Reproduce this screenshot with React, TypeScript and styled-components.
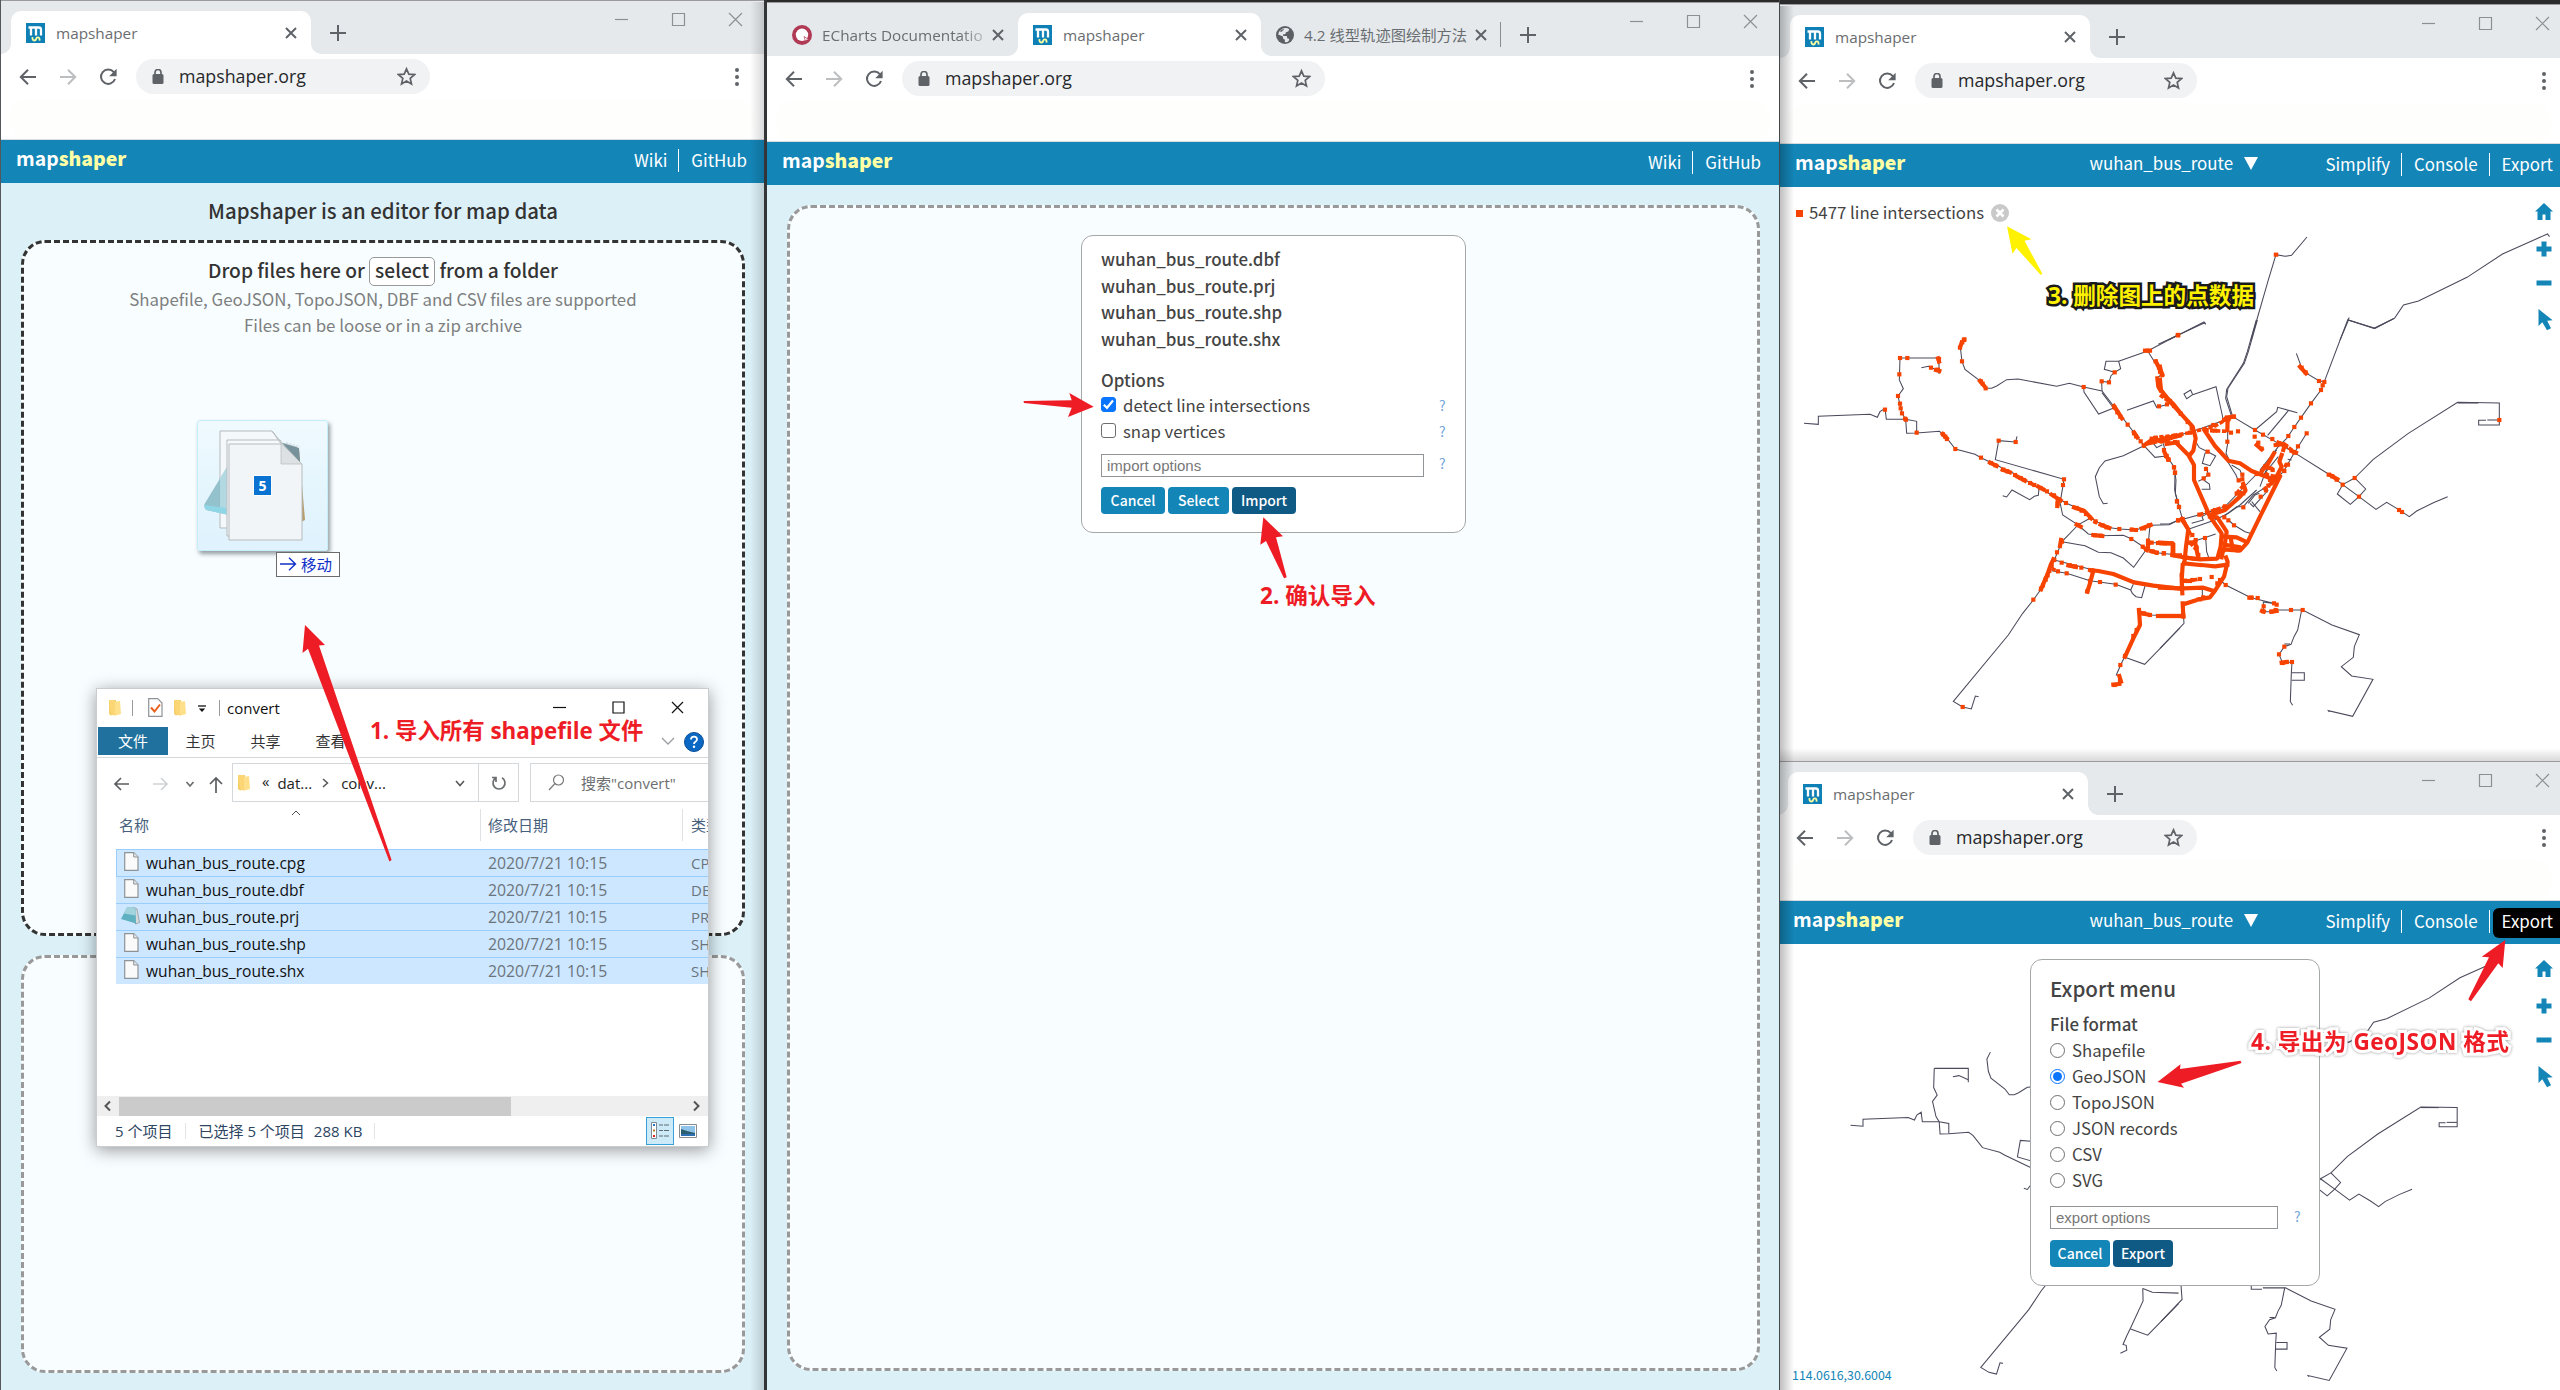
import React from 'react';
import styled, { createGlobalStyle, css } from 'styled-components';

const UI = '"Open Sans", "Noto Sans CJK SC", sans-serif';
const PAGE = '"Noto Sans CJK SC", "Noto Sans", sans-serif';
const BLUE = '#1385b7';
const RED = '#ee1c25';

const Global = createGlobalStyle`
  * { box-sizing: border-box; }
  body { margin: 0; background: #2b2b2b; overflow: hidden; }
`;

const Desktop = styled.div`
  position: relative;
  display: flex;
  width: 2560px;
  height: 1390px;
  overflow: hidden;
  background: #2b2b2b;
`;

/* ---------- windows ---------- */

const Win = styled.section<{ w: number }>`
  display: flex;
  flex-direction: column;
  flex: none;
  width: ${p => p.w}px;
  min-height: 0;
  background: #fff;
  border-top: 1px solid #9b9b9f;
  overflow: hidden;
`;

const LeftCell = styled.div`
  display: flex;
  width: 764px;
  border-left: 1px solid #55585a;
`;

const MiddleCell = styled.div`
  display: flex;
  width: 1016px;
  padding-top: 2px;
  border-left: 3px solid #333536;
  border-right: 1px solid #46494b;
`;

const RightCell = styled.div`
  display: flex;
  flex-direction: column;
  width: 780px;
  padding-top: 4px;
`;

const Strip = styled.div<{ nudge?: number }>`
  display: flex;
  align-items: flex-end;
  flex: none;
  height: 53px;
  padding-left: ${p => 10 + (p.nudge || 0)}px;
  background: #e5e9ec;
`;

const TabBox = styled.div<{ w: number; active?: boolean }>`
  position: relative;
  display: flex;
  align-items: center;
  flex: none;
  width: ${p => p.w}px;
  height: 43px;
  padding: 0 13px 0 15px;
  border-radius: 10px 10px 0 0;
  background: ${p => (p.active ? '#fff' : 'transparent')};
  ${p =>
    p.active &&
    css`
      &::before,
      &::after {
        content: '';
        position: absolute;
        bottom: 0;
        width: 10px;
        height: 10px;
      }
      &::before {
        left: -10px;
        background: radial-gradient(circle at 0 0, transparent 9.5px, #fff 10px);
      }
      &::after {
        right: -10px;
        background: radial-gradient(circle at 100% 0, transparent 9.5px, #fff 10px);
      }
    `}
`;

const TabTitle = styled.span<{ fade?: boolean }>`
  flex: 1;
  margin-right: 1px;
  white-space: nowrap;
  font: 15.3px/22px ${UI};
  color: #6a6d70;
  ${p => p.fade && 'mask-image: linear-gradient(90deg, #000 82%, rgba(0,0,0,.15));'}
`;

const Favicon = styled.span`
  display: block;
  flex: none;
  width: 30px;
  height: 20px;
`;

const TabRule = styled.i`
  align-self: flex-end;
  width: 1px;
  height: 25px;
  margin: 0 0 9px -1px;
  background: #8b8e91;
`;

const PlusWrap = styled.span`
  display: flex;
  align-items: center;
  height: 42px;
  margin-left: 19px;
`;

const Controls = styled.span<{ right: number }>`
  display: flex;
  gap: 42px;
  align-self: flex-start;
  margin: 11px ${p => p.right}px 0 auto;
`;

const Toolbar = styled.div<{ nudge?: number }>`
  display: flex;
  align-items: center;
  flex: none;
  height: 45px;
  padding-left: ${p => 18 + (p.nudge || 0)}px;
`;

const NavIcon = styled.span<{ gap: number }>`
  display: flex;
  width: 18px;
  margin-right: ${p => p.gap}px;
`;

const Pill = styled.div<{ w: number }>`
  display: flex;
  align-items: center;
  width: ${p => p.w}px;
  height: 35px;
  padding: 0 14px 0 16px;
  border-radius: 18px;
  background: #f1f2f4;
`;

const Url = styled.span`
  flex: 1;
  margin: -1px 0 0 15px;
  font: 17.8px/30px ${UI};
  color: #26282b;
`;

const Dots = styled.span<{ right: number }>`
  display: flex;
  flex-direction: column;
  gap: 3px;
  margin: 0 ${p => p.right}px 0 auto;
  i {
    width: 4px;
    height: 4px;
    border-radius: 2px;
    background: #5f6368;
  }
`;

const Blank = styled.div`
  flex: none;
  height: 40px;
  margin: 0 8px;
  background: #fefefc;
  border-radius: 20px;
`;

const HeaderBar = styled.header<{ right: number; left: number }>`
  display: flex;
  align-items: center;
  flex: none;
  height: 44px;
  padding: 0 ${p => p.right}px 0 ${p => p.left}px;
  border-top: 1px solid #d9dcde;
  background: ${BLUE};
  background-clip: padding-box;
  font: 16.9px/30px ${PAGE};
  color: #fff;
`;

const Logo = styled.span`
  font: bold 19.4px/30px ${PAGE};
  margin-top: -7px;
  b {
    color: #ffffa6;
  }
`;

const Links = styled.nav`
  display: flex;
  align-items: center;
  margin: -3px 0 0 auto;
`;

const Link = styled.span<{ on?: boolean }>`
  height: 23px;
  padding: 0 11px 0 12px;
  line-height: 21px;
  &:last-child {
    padding-right: 0;
  }
  & + & {
    position: relative;
    border-left: 1px solid #fff;
  }
  ${p =>
    p.on &&
    css`
      &::before {
        content: '';
        position: absolute;
        z-index: -1;
        inset: -2px -7px -5px 3px;
        border-radius: 6px 0 0 6px;
        background: #000;
      }
      isolation: isolate;
    `}
`;

const Layer = styled.span`
  width: 170px;
  margin: -5px 54px 0 auto;
  white-space: nowrap;
`;

const LinksAfterLayer = styled(Links)`
  margin-left: 0;
`;

const TriDown = styled.i`
  display: inline-block;
  margin-left: 11px;
  border: 7px solid transparent;
  border-top: 13px solid #fff;
  border-bottom: 0;
`;

/* ---------- icons ---------- */

const MsIcon = () => (
  <Favicon>
    <svg width="19" height="20" viewBox="0 0 19 20">
      <rect width="19" height="20" fill="#0f80b5" />
      <path d="M2.500 4.500h10.200q2.300 0 2.300 2.300v5.700M5 4v8.500M10 5v7.500" fill="none" stroke="#fff" strokeWidth="2.300" />
      <path d="M6.500 14.200q-.4 3.300 1.800 3.300 1.500 0 1.800-1.500.3-1.600 1.700-1.600 2.100 0 1.700 3.200" fill="none" stroke="#ffffa0" strokeWidth="1.800" />
    </svg>
  </Favicon>
);

const EchartsIcon = () => (
  <Favicon>
    <svg width="20" height="20" viewBox="0 0 20 20">
      <circle cx="10" cy="10" r="10" fill="#b03a55" />
      <circle cx="10" cy="9.800" r="6.200" fill="#fff" />
      <path d="M12 11.500l5 3.200-2.700.4-.5 2z" fill="#fff" stroke="#b03a55" strokeWidth=".7" />
    </svg>
  </Favicon>
);

const GlobeWrap = styled(Favicon)`
  width: 28px;
  height: 18px;
`;

const GlobeIcon = () => (
  <GlobeWrap>
    <svg width="18" height="18" viewBox="0 0 18 18">
      <circle cx="9" cy="9" r="9" fill="#5c6064" />
      <path d="M9 2q2.500-.4 4.300 1.300l-1 2.300-2.300.6-.6 1.900-2.400.3.200 1.600h3.600l.6 2.500 1.700.3q.5 1.200-.6 2.400Q11 16.800 8.800 16l.1-2.200-1.900-1.400v-2L2.200 8.400Q3 3.200 9 2z" fill="#e5e9ec" />
      <path d="M3.600 5.500l2 .3 2.700-2.600q-3-.4-4.700 2.300z" fill="#5c6064" />
    </svg>
  </GlobeWrap>
);

const CrossIcon = () => (
  <svg width="14" height="14" viewBox="0 0 14 14">
    <path d="M2 2l10 10M12 2L2 12" stroke="#5f6368" strokeWidth="2" />
  </svg>
);

const PlusIcon = () => (
  <svg width="16" height="16" viewBox="0 0 16 16">
    <path d="M8 0v16M0 8h16" stroke="#5f6368" strokeWidth="2" />
  </svg>
);

const Ctl = ({ d, color = '#8d9093' }: { d: string; color?: string }) => (
  <svg width="15" height="15" viewBox="0 0 15 15">
    <path d={d} fill="none" stroke={color} strokeWidth="1.2" />
  </svg>
);

const BackIcon = () => (
  <svg width="18" height="18" viewBox="0 0 18 18">
    <path d="M17 9H2.500M9 1.800L1.800 9 9 16.200" fill="none" stroke="#5f6368" strokeWidth="2" />
  </svg>
);

const ForwardIcon = () => (
  <svg width="18" height="18" viewBox="0 0 18 18">
    <path d="M1 9h14.500M9 1.800L16.200 9 9 16.200" fill="none" stroke="#bcbec0" strokeWidth="2" />
  </svg>
);

const ReloadIcon = () => (
  <svg width="18" height="18" viewBox="0 0 18 18">
    <path d="M14.800 4.200A7.200 7.200 0 1 0 16 11" fill="none" stroke="#5f6368" strokeWidth="2" />
    <path d="M17.600.8v7.400h-7.400z" fill="#5f6368" />
  </svg>
);

const LockIcon = () => (
  <svg width="12" height="16" viewBox="0 0 12 16">
    <rect x=".5" y="5" width="11" height="10" rx="1.500" fill="#5f6368" />
    <path d="M3 6V3.500a3 3 0 0 1 6 0V6" fill="none" stroke="#5f6368" strokeWidth="1.700" />
  </svg>
);

const StarIcon = () => (
  <svg width="19" height="19" viewBox="0 0 19 19">
    <path d="M9.500 1.800l2.300 5.300 5.800.5-4.400 3.800 1.300 5.700-5-3-5 3 1.300-5.700L1.400 7.600l5.800-.5z" fill="none" stroke="#5f6368" strokeWidth="1.700" />
  </svg>
);

/* ---------- chrome ---------- */

type TabData = { title: string; w: number; icon: React.ReactNode; active?: boolean; fade?: boolean };
type ChromeProps = {
  tabs: TabData[];
  pill: number;
  ctlRight: number;
  dotsRight: number;
  nudge?: number;
  rule?: boolean;
};

const Chrome = ({ tabs, pill, ctlRight, dotsRight, nudge, rule }: ChromeProps) => (
  <>
    <Strip nudge={nudge}>
      {tabs.map(t => (
        <TabBox key={t.title} w={t.w} active={t.active}>
          {t.icon}
          <TabTitle fade={t.fade}>{t.title}</TabTitle>
          <CrossIcon />
        </TabBox>
      ))}
      {rule && <TabRule />}
      <PlusWrap>
        <PlusIcon />
      </PlusWrap>
      <Controls right={ctlRight}>
        <Ctl d="M1 7.500h13" />
        <Ctl d="M1.500 1.500h12v12h-12z" />
        <Ctl d="M1 1l13 13M14 1L1 14" />
      </Controls>
    </Strip>
    <Toolbar nudge={nudge}>
      <NavIcon gap={22}><BackIcon /></NavIcon>
      <NavIcon gap={22}><ForwardIcon /></NavIcon>
      <NavIcon gap={19}><ReloadIcon /></NavIcon>
      <Pill w={pill}>
        <LockIcon />
        <Url>mapshaper.org</Url>
        <StarIcon />
      </Pill>
      <Dots right={dotsRight}><i /><i /><i /></Dots>
    </Toolbar>
    <Blank />
  </>
);

type HeaderProps = { links: string[]; right: number; left?: number; layer?: string; active?: string };

const Header = ({ links, right, left = 15, layer, active }: HeaderProps) => {
  const Nav = layer ? LinksAfterLayer : Links;
  return (
    <HeaderBar right={right} left={left}>
      <Logo>map<b>shaper</b></Logo>
      {layer && <Layer>{layer}<TriDown /></Layer>}
      <Nav>
        {links.map(l => <Link key={l} on={l === active}>{l}</Link>)}
      </Nav>
    </HeaderBar>
  );
};

/* ---------- landing page ---------- */

const Page = styled.main`
  display: flex;
  flex-direction: column;
  flex: 1;
  min-height: 0;
  padding: 0 19px 0 20px;
  background: #dcf0f8;
`;

const Headline = styled.h1<{ mt: number; size: number }>`
  margin: ${p => p.mt}px 0 0;
  height: 30px;
  text-align: center;
  font: 500 ${p => p.size}px/30px ${PAGE};
  color: #333;
  white-space: nowrap;
`;

const DropBox = styled.div<{ h: number; c: string; mt: number }>`
  flex: none;
  height: ${p => p.h}px;
  margin-top: ${p => p.mt}px;
  border: 3px dashed ${p => p.c};
  border-radius: 24px;
  background: #f8fdff;
`;

const SelectBtn = styled.span`
  display: inline-block;
  height: 29px;
  padding: 0 5px;
  border: 1px solid #999;
  border-radius: 5px;
  line-height: 25px;
  background: #fff;
`;

const Hint = styled.p`
  margin: 0;
  height: 26px;
  text-align: center;
  font: 16.85px/25px ${PAGE};
  color: #7d7f80;
  white-space: nowrap;
`;

/* ---------- dialogs ---------- */

const Dialog = styled.div<{ w: number; h: number; pad: string }>`
  display: flex;
  flex-direction: column;
  width: ${p => p.w}px;
  height: ${p => p.h}px;
  margin: 0 auto;
  padding: ${p => p.pad};
  border: 1px solid #a5a8a9;
  border-radius: 12px;
  background: #fff;
  font: 16.75px/23px ${PAGE};
  color: #444;
`;

const Strong = styled.div<{ h: number; size?: number }>`
  flex: none;
  height: ${p => p.h}px;
  font-weight: 500;
  font-size: ${p => p.size || 16.9}px;
  line-height: ${p => p.h - 2}px;
`;

const Row = styled.label`
  display: flex;
  align-items: center;
  flex: none;
  height: 26px;
  padding-bottom: 3px;
`;

const Box = styled.i<{ on?: boolean; round?: boolean }>`
  display: flex;
  align-items: center;
  justify-content: center;
  width: 15px;
  height: 15px;
  margin: -1px 7px 0 0;
  border: 1px solid ${p => (p.on ? '#0a75ff' : '#6f6f6f')};
  border-radius: ${p => (p.round ? '50%' : '3px')};
  background: ${p => (p.on && !p.round ? '#0a75ff' : '#fff')};
`;

const RadioDot = styled.i`
  width: 9px;
  height: 9px;
  border-radius: 50%;
  background: #0a75ff;
`;

const Help = styled.span`
  width: 8px;
  margin-left: auto;
  font: 14px/20px ${PAGE};
  color: #74a5d8;
`;

const Field = styled.span<{ w: number }>`
  width: ${p => p.w}px;
  height: 23px;
  margin: 2px 0 -2px;
  padding-left: 5px;
  border: 1px solid #919496;
  background: #fff;
  font: 15px/21px "Liberation Sans", sans-serif;
  color: #777;
`;

const Buttons = styled.div`
  display: flex;
  gap: 3px;
`;

const Button = styled.span<{ dark?: boolean; w: number }>`
  width: ${p => p.w}px;
  height: 27px;
  border-radius: 4px;
  background: ${p => (p.dark ? '#0f5985' : BLUE)};
  text-align: center;
  font: 500 14px/26px ${PAGE};
  color: #fff;
`;

const Spacer = styled.div<{ h: number }>`
  flex: none;
  height: ${p => p.h}px;
`;

const ImportDialog = () => (
  <Dialog w={385} h={298} pad="11px 18px 0 19px">
    {['dbf', 'prj', 'shp', 'shx'].map(e => (
      <Strong key={e} h={26.700}>wuhan_bus_route.{e}</Strong>
    ))}
    <Spacer h={13} />
    <Strong h={27}>Options</Strong>
    <Row>
      <Box on>
        <svg width="13" height="13" viewBox="0 0 13 13">
          <path d="M1.800 6.800l3.200 3 6-7.300" fill="none" stroke="#fff" strokeWidth="2.200" />
        </svg>
      </Box>
      detect line intersections
      <Help>?</Help>
    </Row>
    <Row><Box />snap vertices<Help>?</Help></Row>
    <Spacer h={6} />
    <Row><Field w={323}>import options</Field><Help>?</Help></Row>
    <Spacer h={9} />
    <Buttons>
      <Button w={64}>Cancel</Button>
      <Button w={61}>Select</Button>
      <Button w={64} dark>Import</Button>
    </Buttons>
  </Dialog>
);

const ExportPlace = styled.div`
  position: absolute;
  left: 250px;
  top: 15px;
`;

const ExportDialog = () => (
  <ExportPlace>
    <Dialog w={290} h={327} pad="13px 17px 0 19px">
      <Strong h={32} size={20.600}>Export menu</Strong>
      <Spacer h={6} />
      <Strong h={28}>File format</Strong>
      {['Shapefile', 'GeoJSON', 'TopoJSON', 'JSON records', 'CSV', 'SVG'].map(f => (
        <Row key={f}>
          <Box round on={f === 'GeoJSON'}>{f === 'GeoJSON' && <RadioDot />}</Box>
          {f}
        </Row>
      ))}
      <Spacer h={9} />
      <Row><Field w={228}>export options</Field><Help>?</Help></Row>
      <Spacer h={10} />
      <Buttons>
        <Button w={60}>Cancel</Button>
        <Button w={60} dark>Export</Button>
      </Buttons>
    </Dialog>
  </ExportPlace>
);

/* ---------- bus network ---------- */

const WEST = 'translate(1780 320) scale(.33333)';
const EAST = 'translate(2160 320) scale(.33333)';
const NORTH = 'translate(1776 0) scale(.5 .33333)';

const northLines = [
  '1062,711 1031,766 1018,769 1000,764 985,838 950,1020',
  '1547,710 1543,702 1508,725 1453,762 1382,832 1285,903 1255,915 1237,955 1196,985 1145,960 1128,1020',
  '785,1020 804,1006 856,966 859,973',
];

const westLines = [
  '72,310 115,313 115,289 270,283 292,292 300,275 315,265 319,298 377,298',
  '360,114 477,114 477,162', '424,143 445,139 477,153',
  '360,114 358,180 370,206 354,228 366,280 377,298 410,304 410,338',
  '377,298 380,340 410,339 478,334 493,345 526,387 585,403 603,413 700,460 838,538',
  '553,58 541,82 546,124 555,148 603,185 618,205 635,205 650,198 680,179 714,177 830,199 868,190 911,201 966,213 1003,261 1092,377',
  '911,201 912,216 956,282 1003,263', '966,213 965,184 987,187 993,167 1004,157',
  '1004,157 973,148 978,124 1016,124 1022,146 1004,157', '1016,124 1103,93 1194,45',
  '1103,93 1145,160 1130,180 1155,228 1200,280', '966,218 1005,270',
  '1041,271 1120,243 1130,262 1168,252', '1092,377 1030,407 975,423 958,443 946,470 958,530 970,551 983,550',
  '1092,377 1125,412 1158,408', '1120,370 1130,383 1147,374', '711,349 707,366 656,362 646,419 852,478 849,497 842,538',
  '668,527 680,531 696,510 749,539 763,529 775,526 777,505',
  '838,538 858,549 905,570 930,593 980,622 1018,627 1068,630 1110,616 1168,614 1194,601',
  '838,538 848,585 894,615 930,595', '894,615 925,642 960,647 1030,646 1055,657 1100,687 1130,698 1200,706',
  '894,615 846,665 823,720 785,805 760,840 728,880 685,945 520,1144 548,1161 574,1167 586,1128 596,1130',
  '846,665 915,677 955,697 993,698 1030,714 1061,742 1100,687 1105,668 1110,616',
  '823,720 940,750 1000,762 1090,793 1200,806',
  '815,752 860,760 930,782 1007,793 1052,810 1057,820 1068,830 1085,833 1095,798', '1052,810 1060,793', '940,750 922,815',
  '1077,872 1078,915 1035,1008 1022,1035 1009,1065 1020,1068 1022,1085 1000,1095',
  '1035,1012 1094,1033 1200,924', '1077,872 1110,885 1200,888',
  '1150,370 1158,405 1182,440 1188,480 1186,520 1200,565', '1105,668 1180,668 1180,703',
];

const eastLines = [
  '-5,73 134,8 137,13', '292,0 265,95 253,130 204,205 200,230 218,290', '289,0 262,95 250,130 200,208 197,235 215,290',
  '568,-7 563,0 493,185', '563,0 645,25 700,-4', '409,100 425,143 440,160 478,183 493,185 483,210 453,250 423,293 403,321 380,355 355,380 300,450',
  '98,224 168,200 190,300', '98,224 80,236 72,222 92,210 98,224', '285,330 350,275 353,262 412,278', '385,272 323,346',
  '218,290 285,330 355,370 403,398 510,465 548,494 597,530 648,568 680,547 720,571 748,590 770,573 820,548 863,530',
  '548,494 532,522 571,553 597,530 617,507 584,474 548,494', '584,474 640,418 745,340 893,247 1018,249 1018,300',
  '893,249 955,249', '978,301 956,301 956,315 1018,315 1018,300', '1018,300 982,300',
  '440,340 403,398 370,455 345,480', '0,360 95,335 195,300 218,290',
  '110,370 118,383 143,395 167,408 150,437 127,430 135,400 143,395', '138,440 145,463 131,476 115,484',
  '131,480 148,492 150,508 125,508', '203,300 203,370 198,400 210,425', '203,425 228,465 236,485 250,475 240,450 215,435',
  '205,600 222,615 255,635 270,640', '85,628 165,600 205,580 240,555 290,510', '95,610 130,600 126,590 160,570',
  '107,662 167,642', '137,655 140,695 147,715', '190,590 230,560 250,560 280,525 320,500', '275,545 300,575', '265,550 285,525 298,520',
  '310,465 355,410', '300,500 330,420 350,390', '270,550 280,560 325,510', '383,418 395,420',
  '45,458 44,510 52,545 68,598 135,580 195,560 290,462', '0,612 27,612 55,601', '127,805 127,835',
  '68,855 72,910 0,985', '180,780 197,795 273,833 350,852 310,846 310,875 347,875', '350,870 428,870 516,915 598,944 583,980 580,1012 544,1040 575,1068 639,1078 578,1189 505,1172 508,1176',
  '425,870 413,930 402,950 393,973 373,980 357,1003 368,1029 396,1026 394,1060 391,1145 398,1156', '373,972 390,972', '396,1058 433,1058 433,1081 395,1081',
];

const westThick = [
  '630,428 650,438', '668,449 690,457', '712,470 735,482', '775,500 790,508', '815,524 842,541', '833,540 832,558',
  '882,562 912,572 934,595', '962,614 988,624', '1085,625 1112,615', '940,645 967,648', '1002,258 1026,295', '1062,337 1072,352',
  '865,736 888,741', '930,750 955,753 1000,762 1062,787 1120,797 1200,806', '820,718 812,735 800,770', '797,775 783,808',
  '940,752 930,790 922,815', '1077,870 1080,915 1060,955 1035,1010', '1085,880 1105,884', '1145,888 1200,888', '1018,1068 1023,1085',
  '1000,1094 1018,1092', '1092,376 1120,356 1145,365 1185,350 1200,347', '1106,370 1125,366', '1160,372 1193,367', '1128,125 1147,163',
  '1132,175 1135,200 1142,212', '1155,228 1180,252 1200,278', '1095,92 1110,92', '1155,400 1163,415', '474,115 477,125', '600,183 612,197',
  '468,150 478,153', '890,614 902,620', '1104,662 1104,684 1100,690', '1105,668 1115,668', '1145,670 1180,670 1180,700', '1112,693 1130,698', '1186,706 1200,706', '843,660 840,678',
  '541,80 545,68', '488,342 500,355',
];

const eastThick = [
  '0,140 6,166', '0,180 3,210 30,245 62,280 98,320 107,355 100,392 92,402', '0,360 40,350', '50,370 85,405 102,435 102,480 150,590 185,640 182,680 172,716 120,718 70,712 40,706',
  '133,330 165,378 205,422 240,430 275,453 345,480', '150,585 195,570 240,530 257,512 250,492', '345,470 362,465 300,590 262,668 240,692 190,688 185,712',
  '150,590 172,592 200,635 192,690', '195,650 230,652 255,664', '200,675 242,682 232,690', '65,597 85,628 78,680 73,730', '72,730 120,735', '125,735 165,739 202,734',
  '198,712 203,725 192,770 165,812 150,832 115,838', '68,735 65,780 67,820', '0,803 70,805 130,803 158,812', '70,853 105,842', '68,850 70,890', '5,888 70,888',
  '0,668 38,670 38,700', '105,665 115,715', '90,668 105,668', '355,368 378,378', '395,393 408,398', '342,400 325,430 312,445', '365,405 358,425 365,440 352,465',
  '205,292 222,290', '203,297 202,330', '75,783 90,783', '198,294 205,300', '420,140 438,160', '330,480 350,480', '315,440 333,445',
  '290,375 305,388', '75,712 100,716', '347,375 375,372 370,390', '306,873 311,875', '335,875 350,873', '365,1028 380,1026', '268,833 275,833', '512,466 532,478', '213,660 218,685',
];

const westBeads = [
  '940,604 960,613 980,622', '815,745 835,755', '1120,353 1200,345', '1050,628 1070,630', '1088,680 1102,690', '750,489 765,496',
];

const eastBeads = [
  '0,225 35,250', '40,347 90,338 165,318 200,298', '150,332 205,334', '100,780 120,777', '230,520 252,495', '310,510 340,485 355,470',
  '372,372 405,398', '380,430 368,455', '118,584 165,570 195,560', '70,600 95,650', '90,668 110,690', '300,450 325,465 345,470',
];

const northDots = [[1000, 764], [804, 1006], [376, 1020]];

const westDots = [
  [360, 114], [382, 114], [477, 117], [453, 143], [474, 149], [358, 163], [354, 228], [360, 251], [362, 265], [366, 280], [375, 296], [378, 299], [315, 269], [410, 338],
  [489, 343], [496, 350], [501, 357], [526, 387], [603, 413], [633, 429], [646, 436], [670, 449], [682, 454], [705, 465], [722, 474], [732, 480], [750, 489], [763, 495], [782, 504], [801, 514], [822, 526], [838, 538],
  [553, 58], [547, 67], [540, 83], [546, 124], [603, 184], [608, 191], [617, 205], [911, 201], [965, 184], [987, 187], [1004, 157], [1103, 92], [1127, 124], [1137, 143], [1137, 259], [1161, 253], [1194, 45],
  [1003, 262], [1012, 277], [1021, 290], [1043, 314], [1062, 340], [1068, 349], [1082, 364], [1092, 377], [656, 362], [707, 366], [852, 478], [849, 495], [833, 552], [858, 549],
  [890, 564], [905, 572], [918, 582], [930, 593], [947, 604], [968, 616], [980, 622], [1018, 627], [1055, 629], [1068, 630], [1092, 625], [1107, 616], [894, 615], [945, 646], [962, 647], [1054, 657],
  [846, 665], [831, 697], [823, 720], [815, 738], [808, 753], [803, 766], [797, 779], [789, 796], [783, 806], [760, 839], [845, 728], [870, 736], [885, 739], [904, 743], [834, 754], [860, 760], [935, 752], [930, 783], [960, 786], [1007, 794], [922, 814],
  [1088, 680], [1100, 687], [1118, 694], [1130, 698], [1151, 700], [1177, 705], [1134, 669], [1155, 670], [1107, 668], [1077, 872], [1092, 880], [1110, 885], [1134, 888], [1060, 948], [1070, 930], [1035, 1008], [1021, 1035], [1020, 1083], [1004, 1095], [548, 1161],
  [1152, 390], [1160, 408], [1166, 419], [1182, 442], [1185, 458], [1191, 544], [1197, 561], [1194, 601], [1168, 352], [1184, 348], [1115, 356], [1128, 354], [1137, 360], [1165, 369], [1185, 366],
];

const eastDots = [
  [54, 45], [0, 155], [15, 228], [30, 243], [42, 258], [62, 281], [83, 306], [95, 325], [160, 315], [192, 300], [220, 290], [285, 330], [309, 344], [337, 357], [358, 370], [378, 378], [403, 398], [414, 379], [440, 340], [385, 348], [403, 321], [423, 293], [453, 250], [483, 210], [488, 196], [493, 186], [477, 183], [437, 157], [425, 143],
  [15, 355], [44, 349], [90, 338], [202, 365], [234, 334], [284, 350], [295, 368], [305, 386], [140, 330], [165, 332], [213, 338], [143, 395], [138, 447], [145, 464], [131, 475], [506, 464], [517, 469], [530, 479], [548, 494], [597, 530], [584, 474], [717, 570], [726, 576], [1018, 300],
  [247, 464], [247, 478], [236, 481], [250, 498], [230, 521], [240, 519], [250, 520], [195, 559], [250, 562], [193, 592], [205, 601], [222, 616], [302, 530], [318, 511], [325, 497], [335, 490], [290, 462], [384, 434], [373, 453], [322, 442], [338, 450],
  [18, 408], [25, 419], [42, 442], [45, 458], [51, 544], [57, 561], [55, 601], [68, 597], [118, 584], [165, 570], [135, 654], [107, 660], [97, 645], [92, 668], [110, 683], [115, 705], [12, 700], [38, 704],
  [75, 782], [97, 780], [120, 777], [155, 771], [172, 790], [180, 780], [197, 795], [273, 833], [293, 834], [342, 850], [350, 854], [311, 859], [310, 874], [334, 875], [347, 870], [393, 870], [428, 870], [373, 980], [357, 1003], [368, 1029], [380, 1026], [396, 1026], [120, 838], [130, 832], [65, 765], [66, 800], [69, 885],
];

const Lines = ({ at, lines }: { at: string; lines: string[] }) => (
  <g transform={at} fill="none" stroke="#4a4a5c" strokeWidth="1.050">
    {lines.map((p, i) => <polyline key={i} points={p} vectorEffect="non-scaling-stroke" />)}
  </g>
);

type MarksProps = { at: string; thick: string[]; beads: string[]; dots: number[][]; w?: number };

const Marks = ({ at, thick, beads, dots, w = 12.5 }: MarksProps) => (
  <g transform={at} fill="none" stroke="#f74300">
    {thick.map((p, i) => <polyline key={i} points={p} strokeWidth="12.500" strokeLinejoin="bevel" strokeLinecap="square" />)}
    {beads.map((p, i) => <polyline key={i} points={p} strokeWidth="11" strokeDasharray="13 5" />)}
    {dots.map(([x, y], i) => <rect key={i} x={x - w / 2} y={y - 6.250} width={w} height="12.500" fill="#f74300" stroke="none" />)}
  </g>
);

const Network = () => (
  <>
    <Lines at={NORTH} lines={northLines} />
    <Lines at={WEST} lines={westLines} />
    <Lines at={EAST} lines={eastLines} />
  </>
);

const MapPane = styled.div<{ h: number }>`
  position: relative;
  flex: none;
  height: ${p => p.h}px;
  background: #fff;
  overflow: hidden;
  > svg {
    display: block;
  }
`;

const Legend = styled.div`
  position: absolute;
  left: 16px;
  top: 12px;
  display: flex;
  align-items: center;
  font: 16.800px/26px ${PAGE};
  color: #444;
  i {
    width: 7px;
    height: 7px;
    margin: 2px 6px 0 0;
    background: #f74300;
  }
  svg {
    margin: 2px 0 0 7px;
  }
`;

const Tools = styled.div`
  position: absolute;
  right: 7px;
  top: 16px;
  fill: ${BLUE};
`;

const MapTools = () => (
  <Tools>
    <svg width="18" height="140" viewBox="0 0 18 140">
      <path d="M9 0l9 8.500h-2.500V17h-5v-5.500h-3V17h-5V8.500H0z" />
      <path d="M6.500 38.500h5v5h5v5h-5v5h-5v-5h-5v-5h5zM1.500 77.500h15v5h-15z" />
      <path d="M3.500 106v17l3.800-3.700 4.700 8 4-2-3.800-7.500 5.500-.6z" />
    </svg>
  </Tools>
);

const Coords = styled.span`
  position: absolute;
  left: 12px;
  bottom: 5px;
  font: 12.400px/20px ${PAGE};
  color: ${BLUE};
`;

/* ---------- file explorer ---------- */

const Explorer = styled.div`
  position: absolute;
  left: 96px;
  top: 688px;
  display: flex;
  flex-direction: column;
  width: 613px;
  height: 459px;
  border: 1px solid #c9cdd0;
  background: #fff;
  box-shadow: 0 3px 16px rgba(0, 0, 0, 0.4);
  font: 15px/20px ${UI};
  color: #111;
`;

const Clip = styled.div`
  display: flex;
  flex-direction: column;
  flex: 1;
  overflow: hidden;
  white-space: nowrap;
`;

const ExTitle = styled.div`
  display: flex;
  align-items: center;
  flex: none;
  height: 38px;
  padding: 0 0 1px 12px;
`;

const VRule = styled.i<{ m: string; h?: number; c?: string }>`
  width: 1px;
  height: ${p => p.h || 16}px;
  margin: ${p => p.m};
  background: ${p => p.c || '#9a9a9a'};
`;

const ExControls = styled.span`
  display: flex;
  gap: 44px;
  margin: 0 23px 0 auto;
`;

const Ribbon = styled.div`
  display: flex;
  align-items: center;
  flex: none;
  height: 31px;
  padding-bottom: 3px;
  border-bottom: 1px solid #d5d8da;
`;

const RibbonTab = styled.span<{ on?: boolean }>`
  width: ${p => (p.on ? 70 : 65)}px;
  height: 28px;
  margin-left: ${p => (p.on ? 1 : 0)}px;
  text-align: center;
  line-height: 28px;
  color: ${p => (p.on ? '#fff' : '#333')};
  background: ${p => (p.on ? '#20719d' : 'none')};
`;

const AddressRow = styled.div`
  display: flex;
  align-items: center;
  flex: none;
  height: 50px;
  padding-bottom: 1px;
  color: #222;
`;

const NavArrows = styled.span`
  flex: none;
  width: 135px;
  height: 38px;
`;

const Address = styled.span`
  display: flex;
  align-items: center;
  width: 247px;
  height: 39px;
  padding-left: 5px;
  border: 1px solid #d5d8da;
`;

const RefreshBox = styled.span`
  display: flex;
  align-items: center;
  justify-content: center;
  width: 40px;
  height: 39px;
  margin-right: 11px;
  border: 1px solid #d5d8da;
  border-left: 0;
`;

const Search = styled.span`
  display: flex;
  align-items: center;
  flex: 1;
  height: 39px;
  padding-left: 17px;
  border: 1px solid #d5d8da;
  border-right: 0;
  color: #6d6f71;
`;

const Pad = styled.span<{ m: string }>`
  display: inline-flex;
  flex: none;
  margin: ${p => p.m};
`;

const Columns = styled.div`
  display: flex;
  align-items: center;
  flex: none;
  height: 41px;
  padding: 0 0 7px 22px;
  color: #46607d;
`;

const ColName = styled.span`
  display: flex;
  flex: none;
  width: 361px;
`;

const ColDate = styled.span`
  display: flex;
  align-items: center;
  flex: none;
  width: 203px;
  height: 32px;
  padding-left: 7px;
  border: solid #e0e3e5;
  border-width: 0 1px;
`;

const ColType = styled.span`
  flex: none;
  padding-left: 8px;
`;

const FileRow = styled.div<{ first?: boolean }>`
  display: flex;
  align-items: center;
  flex: none;
  height: 27px;
  margin-left: 19px;
  padding-left: 8px;
  border-top: 1px solid #99cdfb;
  ${p => p.first && 'border-left: 1px solid #99cdfb; padding-left: 7px;'}
  background: #cce7ff;
  color: #6c747b;
`;

const FileName = styled.span`
  flex: none;
  width: 347px;
  padding-left: 5px;
  color: #111;
  font-size: 15.600px;
`;

const FileDate = styled.span`
  flex: none;
  width: 203px;
  font-size: 15.800px;
`;

const ScrollTrack = styled.div`
  display: flex;
  align-items: center;
  flex: none;
  height: 20px;
  margin-top: auto;
  padding: 0 6px 0 5px;
  background: #efefef;
`;

const Thumb = styled.i`
  width: 392px;
  height: 19px;
  margin: 0 auto 0 5px;
  background: #cbcbcb;
`;

const Status = styled.div`
  display: flex;
  align-items: center;
  flex: none;
  height: 30px;
  padding: 0 11px 1px 18px;
  color: #2c4562;
`;

const ViewBtn = styled.span`
  display: flex;
  align-items: center;
  justify-content: center;
  width: 28px;
  height: 28px;
  margin: 0 5px 0 auto;
  border: 1px solid #3aa0d8;
  background: #cdeaf8;
`;

const FolderIcon = () => (
  <svg width="13" height="18" viewBox="0 0 13 18">
    <path d="M0 1h7v14l-5 1.500L0 15z" fill="#f3cf6a" />
    <path d="M5 3l6-1 1 13-7 2z" fill="#ffe08a" />
    <path d="M0 1h6v15l-4-1z" fill="#fcd575" />
  </svg>
);

const DocIcon = () => (
  <svg width="15" height="19" viewBox="0 0 15 19">
    <path d="M.7.700h9L14 5v13.300H.7z" fill="#fafafa" stroke="#8e9396" strokeWidth="1.200" />
    <path d="M9.700.7V5H14" fill="#e6e8e9" stroke="#8e9396" />
  </svg>
);

const NotepadIcon = () => (
  <svg width="19" height="19" viewBox="0 0 19 19">
    <path d="M13 1.500l3 1.500 2.500 13.500-4 1.500z" fill="#d7dadc" stroke="#8a8d90" strokeWidth=".7" />
    <path d="M6 1.500Q10 .2 14.500 2.500L15 17.500 0 13z" fill="#5fb0c0" />
    <path d="M6 1.500Q10 .2 14.500 2.500l.2 7L3 7.500z" fill="#a3d3dc" />
  </svg>
);

const Chevron = ({ d, c = '#555', w = 1.500 }: { d: string; c?: string; w?: number }) => (
  <svg width="12" height="12" viewBox="0 0 12 12">
    <path d={d} fill="none" stroke={c} strokeWidth={w} />
  </svg>
);

const DOWN = 'M2 4l4 4.500L10 4';
const files = [['cpg', 'CPG'], ['dbf', 'DBF'], ['prj', 'PRJ'], ['shp', 'SHP'], ['shx', 'SHX']];

const FileExplorer = () => (
  <Explorer>
    <Clip>
      <ExTitle>
        <FolderIcon />
        <VRule m="0 15px 0 10px" />
        <svg width="15" height="19" viewBox="0 0 15 19">
          <path d="M.7.700h9L14 5v13.300H.7z" fill="#fff" stroke="#8e9396" strokeWidth="1.200" />
          <path d="M3 9.500l3.500 4 5.500-7" fill="none" stroke="#e8601c" strokeWidth="2" />
        </svg>
        <Pad m="0 0 0 11px"><FolderIcon /></Pad>
        <Pad m="2px 0 0 11px">
          <svg width="8" height="8" viewBox="0 0 8 8"><path d="M0 1h8" stroke="#111" strokeWidth="1.300" /><path d="M.8 3.500h6.400L4 7z" fill="#111" /></svg>
        </Pad>
        <VRule m="0 7px 0 13px" />
        convert
        <ExControls>
          <Ctl color="#111" d="M1 7.500h13" />
          <Ctl color="#111" d="M2 2h11v11H2z" />
          <Ctl color="#111" d="M2 2l11 11M13 2L2 13" />
        </ExControls>
      </ExTitle>
      <Ribbon>
        <RibbonTab on>文件</RibbonTab>
        <RibbonTab>主页</RibbonTab>
        <RibbonTab>共享</RibbonTab>
        <RibbonTab>查看</RibbonTab>
        <Pad m="0 0 0 auto">
          <svg width="14" height="12" viewBox="0 0 14 12"><path d="M1 3l6 6 6-6" fill="none" stroke="#9a9da0" strokeWidth="1.300" /></svg>
        </Pad>
        <Pad m="2px 4px 0 9px">
          <svg width="20" height="20" viewBox="0 0 20 20">
            <circle cx="10" cy="10" r="9.500" fill="#0a68c4" stroke="#0b4d94" />
            <path d="M7 7.600q0-3 3-3t3 2.700q0 1.500-1.600 2.500-1.400 1-1.400 2.200" fill="none" stroke="#fff" strokeWidth="1.800" />
            <circle cx="10" cy="14.800" r="1.200" fill="#fff" />
          </svg>
        </Pad>
      </Ribbon>
      <AddressRow>
        <NavArrows>
          <svg width="134" height="38" viewBox="-1 0 134 38" fill="none" strokeWidth="1.700">
            <path d="M31 20H17m6-6l-6 6 6 6" stroke="#5b5e60" />
            <path d="M55 20h14m-6-6l6 6-6 6" stroke="#d0d2d4" />
            <path d="M88.500 18l3.500 4 3.500-4" stroke="#6b6e70" />
            <path d="M118 29V14m-6 6l6-6 6 6" stroke="#5b5e60" />
          </svg>
        </NavArrows>
        <Address>
          <FolderIcon />
          <Pad m="-4px 0 0 11px">«</Pad>
          <Pad m="0 0 0 8px">dat...</Pad>
          <Pad m="0 0 0 7px"><Chevron d="M4 2l4.500 4L4 10" /></Pad>
          <Pad m="0 0 0 10px">conv...</Pad>
          <Pad m="0 12px 0 auto"><Chevron d={DOWN} /></Pad>
        </Address>
        <RefreshBox>
          <svg width="16" height="16" viewBox="0 0 16 16">
            <path d="M11 2.800A6 6 0 1 1 5 2.800M5 7V2.500H1" fill="none" stroke="#6b6e70" strokeWidth="1.700" />
          </svg>
        </RefreshBox>
        <Search>
          <svg width="17" height="17" viewBox="0 0 17 17">
            <circle cx="10.500" cy="6" r="5" fill="none" stroke="#77797b" strokeWidth="1.200" />
            <path d="M7 9.500l-6 6.500" stroke="#77797b" strokeWidth="1.200" />
          </svg>
          <Pad m="0 0 0 16px">搜索"convert"</Pad>
        </Search>
      </AddressRow>
      <Columns>
        <ColName>
          名称
          <Pad m="-8px 0 0 141px"><Chevron d="M2 8l4-4 4 4" w={1} /></Pad>
        </ColName>
        <ColDate>修改日期</ColDate>
        <ColType>类型</ColType>
      </Columns>
      {files.map(([ext, type], i) => (
        <FileRow key={ext} first={i === 0}>
          <Pad m={ext === 'prj' ? '-4px 1px 0 -3px' : '-3px 2px 0 0'}>{ext === 'prj' ? <NotepadIcon /> : <DocIcon />}</Pad>
          <FileName>wuhan_bus_route.{ext}</FileName>
          <FileDate>2020/7/21 10:15</FileDate>
          {type}
        </FileRow>
      ))}
      <ScrollTrack>
        <Chevron d="M8 1.500L3.500 6 8 10.500" w={2} />
        <Thumb />
        <Chevron d="M4 1.500L8.500 6 4 10.500" w={2} />
      </ScrollTrack>
      <Status>
        5 个项目
        <VRule m="0 12px 0 13px" c="#e2e5e8" />
        已选择 5 个项目
        <Pad m="0 0 0 9px">288 KB</Pad>
        <VRule m="0 0 0 12px" c="#e2e5e8" />
        <ViewBtn>
          <svg width="18" height="17" viewBox="0 0 18 17">
            <path d="M.5.500h5v16h-5z" fill="#fff" stroke="#7d8a92" />
            <path d="M8 3h4m1 0h5M8 8.500h4m1 0h5M8 14h4m1 0h5" stroke="#5e6b73" strokeWidth="1.200" />
            <path d="M2 3h2" stroke="#2a7ac0" strokeWidth="2" /><path d="M2 8.500h2" stroke="#b47a2a" strokeWidth="2" /><path d="M2 14h2" stroke="#d22" strokeWidth="2" />
          </svg>
        </ViewBtn>
        <svg width="18" height="14" viewBox="0 0 18 14">
          <path d="M.5.500h17v13H.5z" fill="#fff" stroke="#8a8d90" />
          <path d="M2 2h14v10H2z" fill="#8fc3ea" /><path d="M2 5l6 2 8 2v3H2z" fill="#2d5f6e" /><path d="M2 10h14v2H2z" fill="#2f6fb4" />
        </svg>
      </Status>
    </Clip>
  </Explorer>
);

/* ---------- drag ghost ---------- */

const Ghost = styled.div`
  position: absolute;
  left: 197px;
  top: 420px;
  width: 131px;
  height: 131px;
  border: 1px solid #c5eefb;
  border-radius: 3px;
  background: linear-gradient(#f0faff, #e6f6fd 45%, #dff2fd);
  box-shadow: 2px 3px 4px rgba(80, 90, 100, 0.6);
`;

const Count = styled.span`
  position: absolute;
  left: 55px;
  top: 54px;
  width: 19px;
  height: 21px;
  border: 1px solid #fff;
  background: #0a72d0;
  text-align: center;
  font: bold 14px/19px ${UI};
  color: #fff;
`;

const MoveTip = styled.div`
  position: absolute;
  left: 276px;
  top: 552px;
  display: flex;
  align-items: center;
  gap: 4px;
  width: 64px;
  height: 25px;
  padding: 0 0 1px 3px;
  border: 1px solid #6b6b6b;
  background: #fff;
  font: 15.500px/20px ${PAGE};
  color: #1030c8;
`;

const DragGhost = () => (
  <Ghost>
    <svg width="129" height="129" viewBox="0 0 129 129">
      <path d="M84 24l17 4 6 71-6 3-17-5z" fill="#b79c6c" />
      <path d="M84 22l15 4 2 26H88z" fill="#8ea9b1" />
      <path d="M22 10h52l12 15v82H22z" fill="#f4f8fa" stroke="#b5babd" />
      <path d="M29 46L6.500 83q-1 4 2 6l20 4.500z" fill="#8cbcc8" fillOpacity=".92" />
      <path d="M22 57l7-11v47l-7-1.500z" fill="#bfe3ea" fillOpacity=".7" />
      <path d="M6.500 84l22 3v6.500l-20-4.500q-2-1-2-5z" fill="#8fd6e6" />
      <path d="M29 19h53l10 14v82H29z" fill="#f6fafb" stroke="#b5babd" />
      <path d="M31 23h52l21 20v76H31z" fill="#f2f5f8" stroke="#b5babd" />
      <path d="M74 10l9 12 21 21H83V23z" fill="#dde1e4" stroke="#b5babd" strokeWidth=".7" />
      <path d="M85 22l16 5 1 14z" fill="#78929b" />
      <path d="M88 22l14 4" stroke="#d8dee0" strokeWidth="2" strokeDasharray="2 1.500" />
    </svg>
    <Count>5</Count>
  </Ghost>
);

/* ---------- annotations ---------- */

const ArrowLayer = styled.svg`
  position: absolute;
  inset: 0;
  pointer-events: none;
`;

const Note = styled.span<{ x: number; y: number; size: number; ls?: number; tone?: 'yellow' | 'halo' }>`
  position: absolute;
  left: ${p => p.x}px;
  top: ${p => p.y}px;
  white-space: nowrap;
  font: bold ${p => p.size}px/30px ${UI};
  letter-spacing: ${p => p.ls || 0}px;
  color: ${RED};
  ${p =>
    p.tone === 'yellow' &&
    css`
      color: #fff200;
      -webkit-text-stroke: 5px #1a1a1a;
      paint-order: stroke fill;
    `}
  ${p =>
    p.tone === 'halo' &&
    css`
      -webkit-text-stroke: 6px #fff;
      paint-order: stroke fill;
      filter: drop-shadow(0 0 1.500px #999);
    `}
`;

const Edge = styled.div<{ x: number; y: number; h: number }>`
  position: absolute;
  left: ${p => p.x}px;
  top: ${p => p.y}px;
  width: 14px;
  height: ${p => p.h}px;
  background: linear-gradient(90deg, rgba(0, 0, 0, 0.25), transparent);
  pointer-events: none;
`;

const EdgeLeft = styled(Edge)`
  background: linear-gradient(270deg, rgba(0, 0, 0, 0.15), transparent);
`;

const EdgeUp = styled.div`
  position: absolute;
  left: 1780px;
  top: 748px;
  width: 780px;
  height: 13px;
  background: linear-gradient(0deg, rgba(0, 0, 0, 0.15), transparent);
`;

const single = (): TabData[] => [{ title: 'mapshaper', w: 300, icon: <MsIcon />, active: true }];

export default function App() {
  return (
    <>
      <Global />
      <Desktop>
        <LeftCell>
          <Win w={763}>
            <Chrome tabs={single()} pill={294} ctlRight={21} dotsRight={25} />
            <Header links={['Wiki', 'GitHub']} right={17} />
            <Page>
              <Headline mt={12} size={20.400}>Mapshaper is an editor for map data</Headline>
              <DropBox h={696} c="#333" mt={15}>
                <Headline mt={12} size={19.200}>Drop files here or <SelectBtn>select</SelectBtn> from a folder</Headline>
                <Spacer h={1} />
                <Hint>Shapefile, GeoJSON, TopoJSON, DBF and CSV files are supported</Hint>
                <Hint>Files can be loose or in a zip archive</Hint>
              </DropBox>
              <DropBox h={418} c="#999" mt={19} />
            </Page>
          </Win>
        </LeftCell>

        <MiddleCell>
          <Win w={1012}>
            <Chrome
              tabs={[
                { title: 'ECharts Documentatio', w: 241, icon: <EchartsIcon />, fade: true },
                { title: 'mapshaper', w: 243, icon: <MsIcon />, active: true },
                { title: '4.2 线型轨迹图绘制方法', w: 240, icon: <GlobeIcon /> },
              ]}
              pill={423}
              ctlRight={21}
              dotsRight={25}
              rule
            />
            <Header links={['Wiki', 'GitHub']} right={18} />
            <Page>
              <DropBox h={1166} c="#999" mt={20}>
                <Spacer h={27} />
                <ImportDialog />
              </DropBox>
            </Page>
          </Win>
        </MiddleCell>

        <RightCell>
          <Win w={780}>
            <Chrome tabs={single()} pill={282} ctlRight={10} dotsRight={14} />
            <Header links={['Simplify', 'Console', 'Export']} right={7} layer="wuhan_bus_route" />
          </Win>
          <MapPane h={574}>
            <svg width="780" height="574" viewBox="1780 187 780 574">
              <Network />
              <Marks at={NORTH} thick={[]} beads={[]} dots={northDots} w={9} />
              <Marks at={WEST} thick={westThick} beads={westBeads} dots={westDots} />
              <Marks at={EAST} thick={eastThick} beads={eastBeads} dots={eastDots} />
            </svg>
            <Legend>
              <i />5477 line intersections
              <svg width="18" height="18" viewBox="0 0 18 18">
                <circle cx="9" cy="9" r="9" fill="#c9c9c9" />
                <path d="M5.500 5.500l7 7M12.500 5.500l-7 7" stroke="#fff" strokeWidth="2.600" />
              </svg>
            </Legend>
            <MapTools />
          </MapPane>
          <Win w={780}>
            <Chrome tabs={single()} pill={284} ctlRight={10} dotsRight={14} nudge={-2} />
            <Header links={['Simplify', 'Console', 'Export']} right={7} left={13} layer="wuhan_bus_route" active="Export" />
          </Win>
          <MapPane h={446}>
            <svg width="780" height="446" viewBox="1780 944 780 446">
              <g transform="translate(1850.5 1125) scale(.8725 .871) translate(-1804 -423)">
                <Network />
              </g>
            </svg>
            <MapTools />
            <Coords>114.0616,30.6004</Coords>
            <ExportDialog />
          </MapPane>
        </RightCell>

        <EdgeLeft x={750} y={2} h={1388} />
        <Edge x={1780} y={6} h={1384} />
        <EdgeUp />

        <DragGhost />
        <MoveTip>
          <svg width="17" height="14" viewBox="0 0 17 14"><path d="M0 7h15M9 .7L15.500 7 9 13.300" fill="none" stroke="#1030c8" strokeWidth="1.400" /></svg>
          移动
        </MoveTip>
        <FileExplorer />

        <ArrowLayer width="2560" height="1390" viewBox="0 0 2560 1390" fill={RED}>
          <polygon points="305,625 325,645 319,645.500 391.600,860 389.400,861.500 308,648.700 302.500,653" />
          <polygon points="1023.500,401 1071.700,400.300 1069.300,393 1093.700,406.700 1068,417 1071.700,407.700 1024,403" />
          <polygon points="1263.300,517.300 1283,536.300 1276,537.300 1286.700,577.300 1284,578.300 1266,541 1260.300,544.700" />
          <polygon fill="#fff200" points="2007,226.300 2031.500,239.300 2024.500,240.700 2042.500,274 2040.500,274.700 2016.500,248 2012.500,253.700" />
          <polygon points="2505.300,940 2481.700,956.700 2489,957.300 2468.300,999.300 2471,1001.300 2498.300,963.300 2502.700,968" />
          <polygon points="2157.500,1082 2180.500,1064.300 2180,1069 2240.500,1060.700 2241.500,1063 2181,1083.700 2184,1087.700" />
        </ArrowLayer>
        <Note x={370} y={716} size={22.400}>1. 导入所有 shapefile 文件</Note>
        <Note x={1260} y={581} size={22.600}>2. 确认导入</Note>
        <Note x={2048} y={281} size={22.600} tone="yellow">3. 删除图上的点数据</Note>
        <Note x={2251} y={1027} size={22.600} ls={0.500} tone="halo">4. 导出为 GeoJSON 格式</Note>
      </Desktop>
    </>
  );
}
